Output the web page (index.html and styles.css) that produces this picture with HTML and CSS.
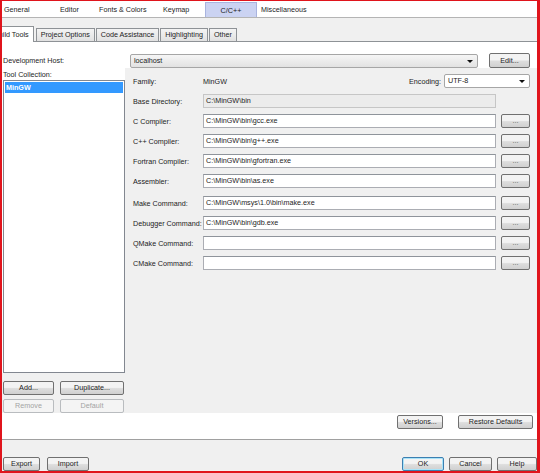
FILE: index.html
```html
<!DOCTYPE html>
<html lang="en">
<head>
    <meta charset="UTF-8">
    <title>Options - C/C++ Build Tools</title>
    <link rel="stylesheet" href="styles.css">
</head>
<body>
    <div class="window">
        <div class="categories">
            <span class="cat cat-general">General</span>
            <span class="cat cat-editor">Editor</span>
            <span class="cat cat-fonts">Fonts &amp; Colors</span>
            <span class="cat cat-keymap">Keymap</span>
            <span class="cat cat-active">C/C++</span>
            <span class="cat cat-misc">Miscellaneous</span>
        </div>

        <div class="tab-strip">
            <span class="tab tab-active">Build Tools</span>
            <span class="tab">Project Options</span>
            <span class="tab">Code Assistance</span>
            <span class="tab">Highlighting</span>
            <span class="tab">Other</span>
        </div>

        <div class="page">
            <div class="host-row">
                <span class="host-label">Development Host:</span>
                <div class="combo combo-host">localhost<span class="arrow"></span></div>
                <button class="btn btn-edit">Edit...</button>
            </div>

            <div class="page-body">
                <div class="collection">
                    <div class="collection-label">Tool Collection:</div>
                    <div class="tool-list">
                        <div class="tool-item selected">MinGW</div>
                    </div>
                    <div class="collection-buttons">
                        <div class="btn-row">
                            <button class="btn btn-add">Add...</button>
                            <button class="btn btn-dup">Duplicate...</button>
                        </div>
                        <div class="btn-row">
                            <button class="btn btn-add" disabled>Remove</button>
                            <button class="btn btn-dup" disabled>Default</button>
                        </div>
                    </div>
                </div>

                <div class="tools-panel">
                    <div class="field-row">
                        <span class="field-label">Family:</span>
                        <span class="family-value">MinGW</span>
                        <span class="encoding-label">Encoding:</span>
                        <div class="combo combo-encoding">UTF-8<span class="arrow"></span></div>
                    </div>
                    <div class="field-row">
                        <span class="field-label">Base Directory:</span>
                        <div class="text-field readonly">C:\MinGW\bin</div>
                    </div>
                    <div class="field-row">
                        <span class="field-label">C Compiler:</span>
                        <div class="text-field">C:\MinGW\bin\gcc.exe</div>
                        <button class="btn btn-browse">...</button>
                    </div>
                    <div class="field-row">
                        <span class="field-label">C++ Compiler:</span>
                        <div class="text-field">C:\MinGW\bin\g++.exe</div>
                        <button class="btn btn-browse">...</button>
                    </div>
                    <div class="field-row">
                        <span class="field-label">Fortran Compiler:</span>
                        <div class="text-field">C:\MinGW\bin\gfortran.exe</div>
                        <button class="btn btn-browse">...</button>
                    </div>
                    <div class="field-row group-end">
                        <span class="field-label">Assembler:</span>
                        <div class="text-field">C:\MinGW\bin\as.exe</div>
                        <button class="btn btn-browse">...</button>
                    </div>
                    <div class="field-row">
                        <span class="field-label">Make Command:</span>
                        <div class="text-field">C:\MinGW\msys\1.0\bin\make.exe</div>
                        <button class="btn btn-browse">...</button>
                    </div>
                    <div class="field-row">
                        <span class="field-label">Debugger Command:</span>
                        <div class="text-field">C:\MinGW\bin\gdb.exe</div>
                        <button class="btn btn-browse">...</button>
                    </div>
                    <div class="field-row">
                        <span class="field-label">QMake Command:</span>
                        <div class="text-field"></div>
                        <button class="btn btn-browse">...</button>
                    </div>
                    <div class="field-row">
                        <span class="field-label">CMake Command:</span>
                        <div class="text-field"></div>
                        <button class="btn btn-browse">...</button>
                    </div>
                </div>
            </div>

            <div class="page-actions">
                <button class="btn btn-versions">Versions...</button>
                <button class="btn btn-restore">Restore Defaults</button>
            </div>
        </div>

        <div class="footer">
            <button class="btn btn-export">Export</button>
            <button class="btn btn-import">Import</button>
            <span class="spacer"></span>
            <button class="btn btn-ok">OK</button>
            <button class="btn btn-cancel">Cancel</button>
            <button class="btn btn-help">Help</button>
        </div>
    </div>
</body>
</html>
```

FILE: styles.css
```css
body {
    margin: 0;
    font-family: "Liberation Sans", Arial, sans-serif;
    font-size: 7.2px;
    color: #1c1c1c;
    background: #fff;
}

.window {
    width: 540px;
    height: 473px;
    box-sizing: border-box;
    border-style: solid;
    border-color: #e0141c;
    border-width: 1px 3px 2px 2px;
    display: flex;
    flex-direction: column;
    overflow: hidden;
    background: #fff;
}

/* top category bar */
.categories {
    height: 16px;
    flex: none;
    display: flex;
    align-items: flex-end;
    border-bottom: 1px solid #b4b4b4;
    background: #fff;
}

.cat {
    height: 15px;
    line-height: 15px;
    box-sizing: border-box;
    white-space: nowrap;
}

.cat-general { width: 56px; padding-left: 2px; }
.cat-editor { width: 37px; padding-left: 2px; }
.cat-fonts { width: 65px; padding-left: 4px; }
.cat-keymap { width: 45px; padding-left: 3px; }
.cat-misc { padding-left: 4px; }

.cat-active {
    width: 52px;
    text-align: center;
    background: #cbd3f2;
    border: 1px solid #a9b4df;
    border-bottom: none;
    line-height: 15px;
}

/* sub tabs */
.tab-strip {
    height: 23px;
    flex: none;
    display: flex;
    align-items: flex-end;
    background: #f0f0f0;
    border-bottom: 1px solid #8e9296;
}

.tab {
    height: 13px;
    line-height: 12px;
    box-sizing: border-box;
    padding: 0 4px;
    margin-left: 1px;
    border: 1px solid #8e9296;
    border-bottom: none;
    background: linear-gradient(#f4f4f4, #e1e1e1);
    white-space: nowrap;
}

.tab-active {
    height: 16px;
    line-height: 15px;
    margin-left: -13px;
    margin-right: 1px;
    margin-bottom: -1px;
    background: #fff;
    position: relative;
}

/* page */
.page {
    height: 397px;
    flex: none;
    display: flex;
    flex-direction: column;
    border-bottom: 1px solid #a0a0a0;
}

.host-row {
    height: 26px;
    flex: none;
    display: flex;
    align-items: flex-end;
}

.host-label {
    width: 128px;
    box-sizing: border-box;
    padding-left: 1px;
    line-height: 14px;
}

.combo {
    position: relative;
    box-sizing: border-box;
    height: 14px;
    line-height: 12px;
    padding-left: 3px;
    border: 1px solid #a6a6a6;
    border-radius: 2px;
}

.combo-host {
    width: 348px;
    background: linear-gradient(#f6f6f6, #e2e2e2);
}

.combo .arrow {
    position: absolute;
    right: 4px;
    top: 5px;
    border-left: 3px solid transparent;
    border-right: 3px solid transparent;
    border-top: 3px solid #111;
}

.btn {
    box-sizing: border-box;
    height: 14px;
    padding: 0;
    font-family: inherit;
    font-size: inherit;
    color: #1c1c1c;
    line-height: 12px;
    text-align: center;
    border: 1px solid #707070;
    border-radius: 2px;
    background: linear-gradient(#f3f3f3 45%, #dddddd 55%, #d0d0d0);
    white-space: nowrap;
}

.btn:disabled {
    color: #a3a3a3;
    border-color: #b9bcbf;
    background: #f4f4f4;
}

.btn-edit {
    width: 41px;
    height: 15px;
    margin-left: 11px;
}

.page-body {
    height: 345px;
    flex: none;
    display: flex;
}

/* tool collection column */
.collection {
    width: 123px;
    flex: none;
    display: flex;
    flex-direction: column;
}

.collection-label {
    height: 12px;
    line-height: 10px;
    padding: 2px 0 0 1px;
    box-sizing: border-box;
}

.tool-list {
    height: 293px;
    margin-left: 1px;
    box-sizing: border-box;
    border: 1px solid #828790;
    background: #fff;
    padding: 1px;
}

.tool-item {
    height: 11px;
    line-height: 11px;
    padding-left: 1px;
}

.tool-item.selected {
    background: #3399ff;
    color: #fff;
    font-weight: bold;
}

.collection-buttons {
    flex: 1;
    background: #f0f0f0;
    padding: 8px 0 0 1px;
    display: flex;
    flex-direction: column;
    gap: 4px;
}

.btn-row {
    display: flex;
    gap: 6px;
}

.btn-add { width: 51px; }
.btn-dup { width: 64px; }

/* tools panel */
.tools-panel {
    flex: 1;
    background: #f0f0f0;
    padding: 3px 7px 0 8px;
}

.field-row {
    height: 20px;
    display: flex;
    align-items: center;
}

.field-row.group-end {
    margin-bottom: 2px;
}

.field-label {
    width: 70px;
    flex: none;
    white-space: nowrap;
}

.family-value {
    flex: 1;
}

.encoding-label {
    margin-right: 3px;
}

.combo-encoding {
    width: 86px;
    background: #fff;
}

.text-field {
    width: 293px;
    height: 14px;
    box-sizing: border-box;
    line-height: 12px;
    padding-left: 2px;
    border: 1px solid #abadb3;
    border-top-color: #8f949b;
    background: #fff;
    white-space: nowrap;
}

.text-field.readonly {
    background: #ececec;
    border-color: #c6c6c6;
}

.btn-browse {
    width: 29px;
    margin-left: 5px;
    color: #555;
}

.page-actions {
    flex: 1;
    display: flex;
    justify-content: flex-end;
    align-items: flex-start;
    padding: 2px 4px 0 0;
    gap: 15px;
}

.btn-versions { width: 46px; }
.btn-restore { width: 75px; }

/* dialog footer */
.footer {
    flex: 1;
    display: flex;
    align-items: flex-start;
    background: #f0f0f0;
    padding: 17px 0 0 1px;
    gap: 7px;
}

.spacer {
    flex: 1;
}

.btn-export { width: 37px; }
.btn-import { width: 42px; }
.btn-ok {
    width: 42px;
    border-color: #3c7fb1;
    box-shadow: inset 0 0 0 1px #a9e3f8;
}
.btn-cancel { width: 43px; margin-left: -2px; }
.btn-help { width: 40px; margin-left: -2px; }
```
